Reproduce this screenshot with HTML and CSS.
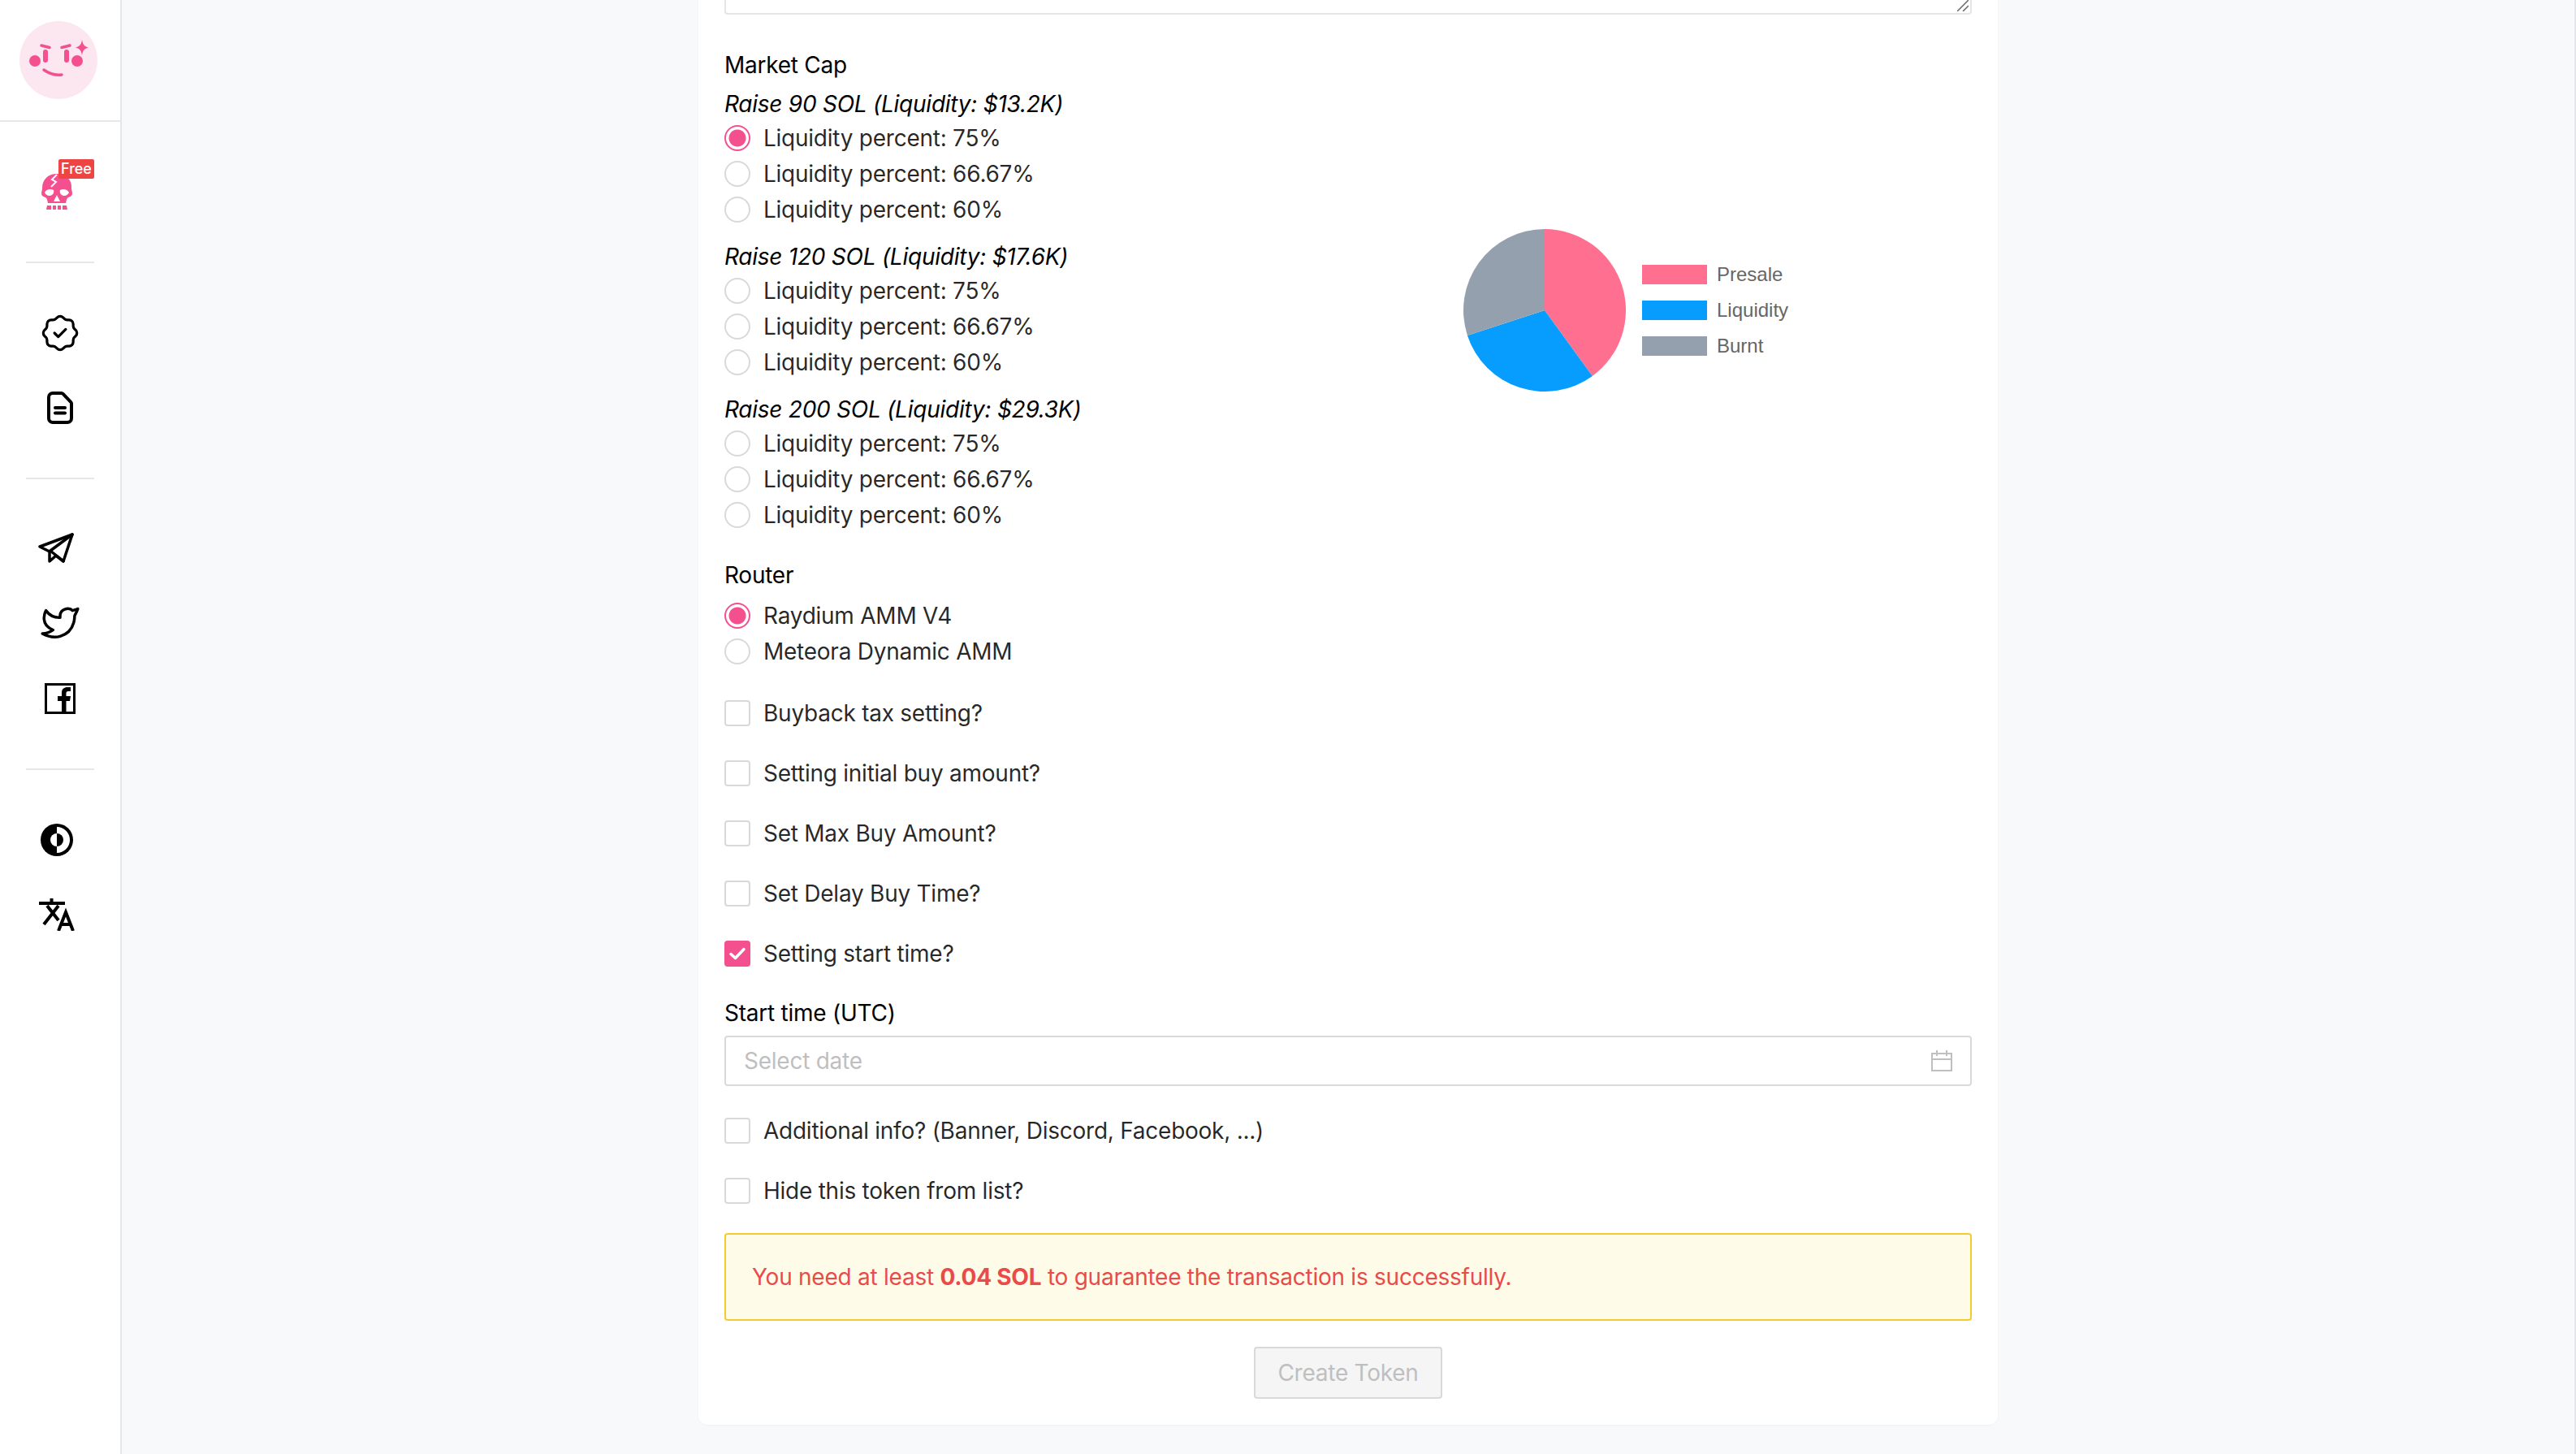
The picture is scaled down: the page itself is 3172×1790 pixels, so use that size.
FILE: index.html
```html
<!DOCTYPE html>
<html lang="en">
<head>
<meta charset="utf-8">
<title>Create Token</title>
<link rel="stylesheet" href="styles.css">
</head>
<body>
<div class="app">
  <aside class="sidebar">
    <div class="logo-box">
      <svg class="logo" viewBox="0 0 96 96">
        <circle cx="48" cy="48" r="48" fill="#fce7f0"/>
        <g fill="#f4508f">
          <circle cx="19" cy="49" r="7"/>
          <circle cx="71" cy="49" r="7"/>
          <rect x="29" y="35" width="6" height="16" rx="3"/>
          <rect x="55" y="35" width="6" height="16" rx="3"/>
          <path d="M77 23c1 6 3 8 8 9.500c-5 1.500-7 3.500-8 9.500c-1-6-3-8-8-9.500c5-1.500 7-3.500 8-9.500z"/>
        </g>
        <g fill="none" stroke="#f4508f" stroke-width="3.500" stroke-linecap="round">
          <path d="M27 30l10 2.500"/>
          <path d="M52 32.500l10-2.500"/>
          <path d="M30 60c7 5 14 7 22 6"/>
        </g>
      </svg>
    </div>
    <nav class="nav">
      <section class="nav-group nav-first">
        <div class="skull-wrap">
          <svg class="skull" viewBox="0 0 40 46">
            <path fill="#f4508f" d="M20 1C9 1 2 8 2 19c0 2-1 4-1 6c0 3 2 4 5 5c2 1 2 3 3 7h22c1-4 1-6 3-7c3-1 5-2 5-5c0-2-1-4-1-6C39 8 31 1 20 1z"/>
            <path fill="#f4508f" d="M8 40h5v5H7zM15 40h4v5h-4zM21 40h4v5h-4zM27 40h5l1 5h-6z"/>
            <path fill="#fff" d="M5 24c2-4 7-5 11-3c1 3-1 7-5 7c-3 0-5-2-6-4zM35 24c-2-4-7-5-11-3c-1 3 1 7 5 7c3 0 5-2 6-4zM20 27l4 8h-8z"/>
            <path fill="none" stroke="#fff" stroke-width="2" d="M20 2l-6 6l5 3l-6 6"/>
          </svg>
          <span class="free">Free</span>
        </div>
      </section>
      <section class="nav-group">
        <svg class="ico ico-a" viewBox="2 2 20 20" fill="none" stroke="#000" stroke-width="1.400" stroke-linecap="round" stroke-linejoin="round">
          <path d="M5 7.200a2.200 2.200 0 0 1 2.200-2.200h1a2.200 2.200 0 0 0 1.550-.64l.7-.7a2.200 2.200 0 0 1 3.120 0l.7.7a2.200 2.200 0 0 0 1.550.64h1a2.200 2.200 0 0 1 2.200 2.200v1a2.200 2.200 0 0 0 .64 1.550l.7.7a2.200 2.200 0 0 1 0 3.120l-.7.7a2.200 2.200 0 0 0-.64 1.550v1a2.200 2.200 0 0 1-2.200 2.200h-1a2.200 2.200 0 0 0-1.550.64l-.7.7a2.200 2.200 0 0 1-3.120 0l-.7-.7a2.200 2.200 0 0 0-1.550-.64h-1a2.200 2.200 0 0 1-2.200-2.200v-1a2.200 2.200 0 0 0-.64-1.550l-.7-.7a2.200 2.200 0 0 1 0-3.120l.7-.7a2.200 2.200 0 0 0 .64-1.550v-1"/>
          <path d="M9 12l2 2l4-4"/>
        </svg>
        <svg class="ico ico-b" viewBox="0 0 32 40" fill="none" stroke="#000" stroke-width="4" stroke-linecap="round" stroke-linejoin="round">
          <path d="M7 2h10.500a3 3 0 0 1 2.100.9l9.500 10a3 3 0 0 1 .9 2V33a5 5 0 0 1-5 5H7a5 5 0 0 1-5-5V7a5 5 0 0 1 5-5z"/>
          <path d="M10 20h12M10 26.500h12"/>
        </svg>
      </section>
      <section class="nav-group">
        <svg class="ico ico-c" viewBox="0 0 44 40" fill="none" stroke="#000" stroke-width="3.500" stroke-linecap="round" stroke-linejoin="round">
          <path d="M42 3L2 18l12 6v12l8-7l9 7z"/>
          <path d="M42 3L15 23L31 36"/>
        </svg>
        <svg class="ico ico-d" viewBox="1 2 22 21" fill="none" stroke="#000" stroke-width="1.600" stroke-linecap="round" stroke-linejoin="round">
          <path d="M22 4.010c-1 .49-1.980.689-3 .99c-1.121-1.265-2.783-1.335-4.380-.737s-2.643 2.060-2.620 3.737v1c-3.245.083-6.135-1.395-8-4c0 0-4.182 7.433 4 11c-1.872 1.247-3.739 2.088-6 2c3.308 1.803 6.913 2.423 10.034 1.517c3.580-1.040 6.522-3.723 7.651-7.742a13.840 13.840 0 0 0 .497-3.753c0-.249 1.510-2.772 1.818-4.013z"/>
        </svg>
        <svg class="ico ico-e" viewBox="0 0 38 38">
          <rect x="1.500" y="1.500" width="35" height="35" fill="none" stroke="#000" stroke-width="3"/>
          <path d="M21 36V22h-5v-6h5v-4c0-5 3-7 7-7h4v5h-3c-2 0-2.500 1-2.500 2.500V16h5.500l-1 6h-4.500v14z"/>
        </svg>
      </section>
      <section class="nav-group nav-last">
        <svg class="ico ico-f" viewBox="0 0 40 40">
          <circle cx="20" cy="20" r="20"/>
          <path fill="#fff" d="M20 4a16 16 0 0 1 0 32z"/>
          <path d="M20 12a8 8 0 0 1 0 16z"/>
          <path fill="#fff" d="M20 12a8 8 0 0 0 0 16z"/>
        </svg>
        <svg class="ico ico-g" viewBox="0 0 44 40" fill="none" stroke="#000" stroke-width="4">
          <path d="M0 6h32M15.500 0v6M10 9l14 18M24 9L6 32"/>
          <path d="M24 40l9-23l9 23M27 32h12"/>
        </svg>
      </section>
    </nav>
  </aside>
  <main class="main">
    <form class="card">
      <div class="textarea"><svg class="grip" viewBox="0 0 14 14" fill="none" stroke="#666" stroke-width="1.500"><path d="M0 14L14 0M7 14l7-7"/></svg></div>
      <div class="split">
        <div class="options">
          <div class="label cap">Market Cap</div>
          <div class="raise first">Raise 90 SOL (Liquidity: $13.2K)</div>
          <div class="row"><span class="radio on"></span>Liquidity percent: 75%</div>
          <div class="row"><span class="radio"></span>Liquidity percent: 66.67%</div>
          <div class="row"><span class="radio"></span>Liquidity percent: 60%</div>
          <div class="raise">Raise 120 SOL (Liquidity: $17.6K)</div>
          <div class="row"><span class="radio"></span>Liquidity percent: 75%</div>
          <div class="row"><span class="radio"></span>Liquidity percent: 66.67%</div>
          <div class="row"><span class="radio"></span>Liquidity percent: 60%</div>
          <div class="raise">Raise 200 SOL (Liquidity: $29.3K)</div>
          <div class="row"><span class="radio"></span>Liquidity percent: 75%</div>
          <div class="row"><span class="radio"></span>Liquidity percent: 66.67%</div>
          <div class="row"><span class="radio"></span>Liquidity percent: 60%</div>
        </div>
        <div class="chart">
          <svg class="pie" viewBox="0 0 200 200">
            <path fill="#ff6f8f" d="M100 100V0A100 100 0 0 1 158.800 180.900z"/>
            <path fill="#069dff" d="M100 100L158.800 180.900A100 100 0 0 1 4.900 130.900z"/>
            <path fill="#94a0ae" d="M100 100L4.900 130.900A100 100 0 0 1 100 0z"/>
          </svg>
          <ul class="legend">
            <li><i class="sw sw-a"></i>Presale</li>
            <li><i class="sw sw-b"></i>Liquidity</li>
            <li><i class="sw sw-c"></i>Burnt</li>
          </ul>
        </div>
      </div>
      <div class="label router">Router</div>
      <div class="router-opts">
        <div class="row"><span class="radio on"></span>Raydium AMM V4</div>
        <div class="row"><span class="radio"></span>Meteora Dynamic AMM</div>
      </div>
      <div class="checks">
        <div class="row"><span class="check"></span>Buyback tax setting?</div>
        <div class="row"><span class="check"></span>Setting initial buy amount?</div>
        <div class="row"><span class="check"></span>Set Max Buy Amount?</div>
        <div class="row"><span class="check"></span>Set Delay Buy Time?</div>
        <div class="row"><span class="check on"><svg viewBox="0 0 32 32" fill="none" stroke="#fff" stroke-width="3.500" stroke-linecap="round" stroke-linejoin="round"><path d="M8 16.500l5.500 5L24 10.500"/></svg></span>Setting start time?</div>
      </div>
      <div class="label start">Start time (UTC)</div>
      <div class="date">
        <span>Select date</span>
        <svg class="cal" viewBox="0 0 26 26" fill="none" stroke="#bfbfbf" stroke-width="2"><rect x="1" y="4" width="24" height="21"/><path d="M1 11h24M7 0v7M19 0v7"/></svg>
      </div>
      <div class="checks extra">
        <div class="row"><span class="check"></span>Additional info? (Banner, Discord, Facebook, ...)</div>
        <div class="row"><span class="check"></span>Hide this token from list?</div>
      </div>
      <div class="alert">You need at least <b>0.04 SOL</b> to guarantee the transaction is successfully.</div>
      <div class="actions"><button type="button" class="submit" disabled>Create Token</button></div>
    </form>
  </main>
</div>
</body>
</html>
```

FILE: styles.css
```css
* { box-sizing: border-box; }
html, body { margin: 0; height: 100%; overflow: hidden; }
body { font-family: Inter, "Liberation Sans", sans-serif; font-size: 28px; line-height: 40px; letter-spacing: -0.25px; color: #000; background: #f8f9fb; }

.app { display: flex; height: 1790px; }

.sidebar { width: 150px; flex: none; background: #fff; border-right: 2px solid #e5e7eb; display: flex; flex-direction: column; }
.logo-box { height: 150px; padding: 26px 0 0 24px; border-bottom: 2px solid #e5e7eb; }
.logo { display: block; width: 96px; height: 96px; }
.nav { display: flex; flex-direction: column; padding: 0 32px; }
.nav-group { display: flex; flex-direction: column; border-bottom: 2px solid #e5e7eb; }
.nav-first { height: 174px; padding-top: 46px; }
.nav-group:nth-child(2) { height: 266px; }
.nav-group:nth-child(3) { height: 358px; }
.nav-last { border-bottom: 0; }
.skull-wrap { position: relative; width: 84px; height: 62px; }
.skull { position: absolute; left: 18px; top: 17px; width: 40px; height: 46px; display: block; }
.free { position: absolute; left: 40px; top: 0; width: 44px; height: 24px; background: #ef4444; color: #fff; border-radius: 2px; font-size: 18px; line-height: 24px; font-weight: 500; letter-spacing: 0; text-align: center; }
.ico { display: block; flex: none; }
.ico-a { width: 46px; height: 46px; margin: 63px 0 0 19px; }
.ico-b { width: 32px; height: 40px; margin: 49px 0 0 26px; }
.ico-c { width: 44px; height: 40px; margin: 65px 0 0 15px; }
.ico-d { width: 48px; height: 46px; margin: 50px 0 0 18px; }
.ico-e { width: 38px; height: 38px; margin: 50px 0 0 23px; }
.ico-f { width: 40px; height: 40px; margin: 66px 0 0 18px; }
.ico-g { width: 44px; height: 40px; margin: 52px 0 0 16px; }

.main { flex: 1; min-width: 0; height: 1790px; padding: 0 710px 36px; border-right: 2px solid #e5e7eb; display: flex; flex-direction: column; justify-content: flex-end; overflow: hidden; }
.card { flex: none; background: #fff; border-radius: 0 0 12px 12px; padding: 0 32px 32px; box-shadow: 0 1px 3px rgba(0,0,0,.03); }

.textarea { position: relative; height: 120px; border: 2px solid #e5e5e5; border-radius: 4px; }
.grip { position: absolute; right: 2px; bottom: 2px; width: 14px; height: 14px; display: block; }

.split { display: flex; }
.options { width: 768px; flex: none; }
.label { height: 40px; }
.cap { margin-top: 42px; }
.raise { height: 40px; margin-top: 16px; font-style: italic; }
.raise.first { margin-top: 8px; }
.row { display: flex; align-items: center; height: 44px; gap: 16px; color: rgba(0,0,0,.85); }

.radio { width: 32px; height: 32px; flex: none; border: 2px solid #d9d9d9; border-radius: 50%; background: #fff; }
.radio.on { border-color: #f4508f; background: radial-gradient(circle, #f4508f 0 10px, #fff 11px); }
.check { width: 32px; height: 32px; flex: none; border: 2px solid #d9d9d9; border-radius: 4px; background: #fff; }
.check.on { border: 0; background: #f4508f; }
.check svg { display: block; width: 32px; height: 32px; }

.chart { display: flex; align-items: flex-start; padding: 264px 0 0 142px; font-family: "Liberation Sans", Arial, sans-serif; letter-spacing: 0; }
.pie { width: 200px; height: 200px; display: block; flex: none; }
.legend { list-style: none; margin: 44px 0 0 20px; padding: 0; display: flex; flex-direction: column; gap: 20px; font-size: 24px; line-height: 24px; color: #666; }
.legend li { display: flex; align-items: center; gap: 12px; height: 24px; }
.sw { display: block; width: 80px; height: 24px; }
.sw-a { background: #ff6f8f; }
.sw-b { background: #069dff; }
.sw-c { background: #94a0ae; }

.router { margin-top: 32px; }
.router-opts { margin-top: 8px; }
.checks { display: flex; flex-direction: column; gap: 30px; margin-top: 32px; }
.start { margin-top: 31px; }
.date { display: flex; align-items: center; justify-content: space-between; height: 62px; margin-top: 8px; padding: 0 22px 0 22px; border: 2px solid #d9d9d9; border-radius: 4px; color: #bfbfbf; }
.cal { width: 26px; height: 26px; display: block; }
.extra { margin-top: 33px; }

.alert { height: 108px; margin-top: 30px; padding: 0 32px; display: flex; align-items: center; white-space: pre-wrap; background: #fefce8; border: 2px solid #f3cb2f; border-radius: 4px; color: #e94b4b; }
.alert b { font-weight: 700; }
.actions { display: flex; justify-content: center; margin-top: 32px; }
.submit { width: 232px; height: 64px; padding: 0; font: inherit; letter-spacing: inherit; color: #bfbfbf; background: #f5f5f5; border: 2px solid #d9d9d9; border-radius: 4px; }
```
